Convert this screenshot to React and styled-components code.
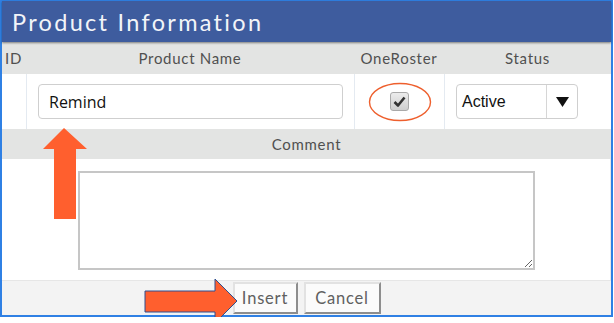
import React from 'react';
import styled, { createGlobalStyle } from 'styled-components';

const GlobalStyle = createGlobalStyle`
  body {
    margin: 0;
    background: #ffffff;
    font-family: Lato, "Open Sans", sans-serif;
  }
`;

const Panel = styled.div`
  position: relative;
  width: 613px;
  box-sizing: border-box;
  border: 2px solid #2f80e4;
  border-top-width: 1px;
  background: #ffffff;
`;

const Header = styled.div`
  position: relative;
  z-index: 1;
  height: 41px;
  display: flex;
  align-items: center;
  padding-left: 10px;
  background: #3e5c9e;
  box-shadow: 0 1px 2px rgba(0, 0, 0, 0.45);
`;

const Title = styled.h1`
  margin: 0;
  font-family: Lato, sans-serif;
  font-size: 23.5px;
  font-weight: 400;
  letter-spacing: 2.3px;
  color: #f2f4f8;
`;

const Grid = styled.div`
  display: grid;
  grid-template-columns: 24px 328px 90px 1fr;
`;

const HeadCell = styled.div`
  height: 32px;
  display: flex;
  align-items: center;
  justify-content: ${(p) => (p.$left ? 'flex-start' : 'center')};
  padding-left: ${(p) => (p.$left ? '3px' : '0')};
  background: #e3e4e3;
  font-size: 15px;
  letter-spacing: 0.7px;
  color: #505050;
`;

const Cell = styled.div`
  height: 55px;
  box-sizing: border-box;
  display: flex;
  align-items: center;
  justify-content: center;
  padding: 0 11px;
  border-left: ${(p) => (p.$first ? 'none' : '1px solid #e4eaf1')};
  position: relative;
`;

const TextInput = styled.input`
  width: 100%;
  height: 35px;
  box-sizing: border-box;
  border: 1px solid #cfcfcf;
  border-radius: 4px;
  padding: 0 10px;
  font-family: "Open Sans", sans-serif;
  font-size: 16px;
  color: #111;
  outline: none;
`;

const CheckBox = styled.div`
  width: 19px;
  height: 19px;
  box-sizing: border-box;
  border: 1px solid #a9a9a9;
  border-radius: 3px;
  background: linear-gradient(#ececec, #cfcfcf);
  display: flex;
  align-items: center;
  justify-content: center;
`;

const Ring = styled.svg`
  position: absolute;
  left: 14px;
  top: 9px;
  overflow: visible;
`;

const Select = styled.div`
  width: 122px;
  height: 35px;
  box-sizing: border-box;
  margin-right: auto;
  display: flex;
  border: 1px solid #cfcfcf;
  border-radius: 4px;
  font-family: "Liberation Sans", Arial, sans-serif;
  font-size: 16px;
  color: #111;
`;

const SelectValue = styled.div`
  flex: 1;
  display: flex;
  align-items: center;
  padding-left: 5px;
  border-right: 1px solid #d6d6d6;
`;

const SelectArrow = styled.div`
  width: 30px;
  display: flex;
  align-items: center;
  justify-content: center;
`;

const SectionHead = styled.div`
  height: 30px;
  display: flex;
  align-items: center;
  justify-content: center;
  background: #e3e4e3;
  font-size: 15px;
  letter-spacing: 0.7px;
  color: #505050;
`;

const CommentBody = styled.div`
  display: flex;
  justify-content: center;
  padding: 12px 0 10px;
  border-right: 1px solid #e8e8e8;
`;

const TextArea = styled.textarea`
  width: 457px;
  height: 99px;
  box-sizing: border-box;
  border: 2px solid #c6c6c6;
  border-radius: 0;
  outline: none;
  font-family: Lato, sans-serif;
  resize: both;
`;

const Footer = styled.div`
  height: 35px;
  box-sizing: border-box;
  display: flex;
  justify-content: center;
  gap: 6px;
  padding-top: 1px;
  background: #f3f3f3;
  border-top: 1px solid #e6e6e6;
`;

const Button = styled.button`
  width: ${(p) => p.$w}px;
  height: 32px;
  padding: 0;
  box-sizing: border-box;
  border: 2px solid;
  border-color: #e2e2e2 #8d8d8d #8d8d8d #e2e2e2;
  background: #fbfbfb;
  font-family: Lato, sans-serif;
  font-size: 16.5px;
  letter-spacing: 0.8px;
  color: #606060;
`;

const Overlay = styled.svg`
  position: absolute;
  left: 0;
  top: 0;
  overflow: visible;
  pointer-events: none;
`;

export default function App() {
  return (
    <>
      <GlobalStyle />
      <Panel>
        <Header>
          <Title>Product Information</Title>
        </Header>
        <Grid>
          <HeadCell $left>ID</HeadCell>
          <HeadCell>Product Name</HeadCell>
          <HeadCell>OneRoster</HeadCell>
          <HeadCell>Status</HeadCell>

          <Cell $first />
          <Cell>
            <TextInput defaultValue="Remind" />
          </Cell>
          <Cell>
            <CheckBox>
              <svg width="13" height="11" viewBox="0 0 13 11">
                <path d="M1.5 6 L5 9.5 L11.5 1.5" fill="none" stroke="#333" strokeWidth="2.6" strokeLinejoin="round" />
              </svg>
            </CheckBox>
            <Ring width="62" height="38">
              <ellipse cx="31" cy="19" rx="30.5" ry="18.5" fill="none" stroke="#ee5f2d" strokeWidth="1.4" />
            </Ring>
          </Cell>
          <Cell>
            <Select>
              <SelectValue>Active</SelectValue>
              <SelectArrow>
                <svg width="13" height="10" viewBox="0 0 13 10">
                  <polygon points="0,0 13,0 6.5,10" fill="#111" />
                </svg>
              </SelectArrow>
            </Select>
          </Cell>
        </Grid>
        <SectionHead>Comment</SectionHead>
        <CommentBody>
          <TextArea />
        </CommentBody>
        <Footer>
          <Button $w={65}>Insert</Button>
          <Button $w={77}>Cancel</Button>
        </Footer>
        <Overlay width="614" height="323">
          <polygon points="62,127 85,148 74,148 74,218 52,218 52,148 41,148" fill="#ff5f2e" />
          <polygon
            points="143,290 213,290 213,278 235,300 213,322 213,311 143,311"
            fill="#ff5f2e"
            stroke="#2f4f8f"
            strokeWidth="1"
          />
        </Overlay>
      </Panel>
    </>
  );
}
